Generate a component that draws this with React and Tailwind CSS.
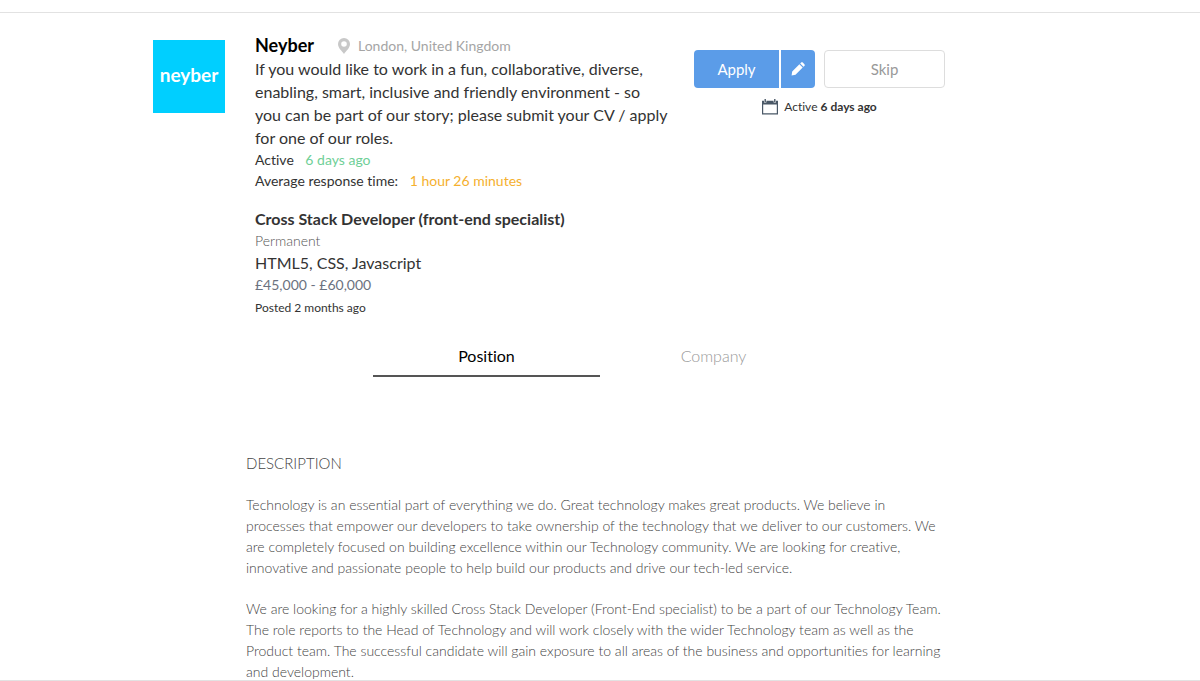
import React, { useState } from "react";

const PinIcon = () => (
  <svg viewBox="0 0 12 16" className="h-4 w-3 fill-[#c8c8c8]" aria-hidden="true">
    <path
      fillRule="evenodd"
      d="M6 0a6 6 0 0 0-6 6c0 4 4 7 6 10 2-3 6-6 6-10a6 6 0 0 0-6-6zm0 3.2a2.8 2.8 0 1 1 0 5.6 2.8 2.8 0 0 1 0-5.6z"
    />
  </svg>
);

const PencilIcon = () => (
  <svg viewBox="0 0 14 14" className="size-[14px] fill-white" aria-hidden="true">
    <path d="M.6 13.4l.6-3.9 7.2-7.2 3.3 3.3-7.2 7.2zM9.2 1.5l.9-.9c.5-.5 1.2-.5 1.7 0l1.6 1.6c.5.5.5 1.2 0 1.7l-.9.9z" />
  </svg>
);

const CalendarIcon = () => (
  <svg viewBox="0 0 16 16" className="size-4 fill-[#4a5867]" aria-hidden="true">
    <path
      fillRule="evenodd"
      d="M0 1.8h2v1.6h2.4V1.8h7.2v1.6H14V1.8h2v13.7H0zM1.2 5.5v8.8h13.6V5.5z"
    />
    <path d="M2.5 0h1.4v3H2.5zM12.1 0h1.4v3h-1.4z" />
  </svg>
);

const tabs = ["Position", "Company"];

const paragraphs = [
  "Technology is an essential part of everything we do. Great technology makes great products. We believe in processes that empower our developers to take ownership of the technology that we deliver to our customers. We are completely focused on building excellence within our Technology community. We are looking for creative, innovative and passionate people to help build our products and drive our tech-led service.",
  "We are looking for a highly skilled Cross Stack Developer (Front-End specialist) to be a part of our Technology Team. The role reports to the Head of Technology and will work closely with the wider Technology team as well as the Product team. The successful candidate will gain exposure to all areas of the business and opportunities for learning and development.",
];

const JobHeader = () => (
  <header className="mx-auto flex max-w-[894px] items-start pt-[21px]">
    <div className="mt-[6px] flex h-[73px] w-[72px] shrink-0 items-center justify-center bg-[#00cfff] pb-0.5 text-[19px] font-bold text-white">
      neyber
    </div>

    <div className="ml-[30px] w-[414px] shrink-0 text-[#333]">
      <div className="flex items-center">
        <h1 className="text-[18px] leading-[23px] font-bold text-black">Neyber</h1>
        <span className="ml-6 flex items-center gap-2 text-[14px] leading-[21px] text-[#a5a5a5]">
          <PinIcon />
          London, United Kingdom
        </span>
      </div>
      <p className="text-[16px] leading-[23px]">
        If you would like to work in a fun, collaborative, diverse, enabling,
        smart, inclusive and friendly environment - so you can be part of our
        story; please submit your CV / apply for one of our roles.
      </p>
      <p className="text-[14px] leading-[21px]">
        Active <span className="ml-2 text-[#6fcf97]">6 days ago</span>
      </p>
      <p className="text-[14px] leading-[21px]">
        Average response time:{" "}
        <span className="ml-2 text-[#f5b02e]">1 hour 26 minutes</span>
      </p>

      <h2 className="mt-4 text-[16px] leading-[23px] font-bold">
        Cross Stack Developer (front-end specialist)
      </h2>
      <p className="text-[14px] leading-[21px] font-light text-[#555]">Permanent</p>
      <p className="text-[16px] leading-[23px]">HTML5, CSS, Javascript</p>
      <p className="text-[14px] leading-[21px] text-[#6b7280]">£45,000 - £60,000</p>
      <p className="mt-0.5 text-[12px] leading-[21px]">Posted 2 months ago</p>
    </div>

    <div className="mt-4 ml-[25px] w-[251px] shrink-0">
      <div className="flex text-[15px]">
        <button type="button" className="h-[38px] w-[85px] rounded-l bg-[#5b9ce8] text-white">
          Apply
        </button>
        <button
          type="button"
          aria-label="Edit application"
          className="ml-0.5 flex h-[38px] w-[34px] items-center justify-center rounded-r bg-[#5b9ce8]"
        >
          <PencilIcon />
        </button>
        <button
          type="button"
          className="ml-[9px] h-[38px] flex-1 rounded border border-[#ddd] bg-white text-[#999]"
        >
          Skip
        </button>
      </div>
      <p className="mt-2 flex items-center justify-center gap-[6px] text-[12px] leading-[21px] text-[#333]">
        <CalendarIcon />
        <span>
          Active <strong>6 days ago</strong>
        </span>
      </p>
    </div>
  </header>
);

const App = () => {
  const [active, setActive] = useState("Position");

  return (
    <div className="mt-3 border-y border-[#e2e2e2] bg-white font-['Lato',sans-serif] [font-variant-ligatures:none]">
      <JobHeader />

      <nav className="mx-auto mt-[18px] flex max-w-[454px]" role="tablist">
        {tabs.map((tab) => (
          <button
            key={tab}
            type="button"
            role="tab"
            aria-selected={active === tab}
            onClick={() => setActive(tab)}
            className={`h-[41px] flex-1 border-b-2 text-[16px] ${
              active === tab
                ? "border-[#555] text-black"
                : "border-transparent font-light text-[#999]"
            }`}
          >
            {tab}
          </button>
        ))}
      </nav>

      <main className="mx-auto mt-[76px] -mb-0.5 max-w-[708px] pr-3 text-[14px] leading-[21px] font-light text-[#444]">
        <h3 className="text-[15px]">DESCRIPTION</h3>
        {paragraphs.map((text) => (
          <p key={text} className="mt-5">
            {text}
          </p>
        ))}
      </main>
    </div>
  );
};

export default App;
